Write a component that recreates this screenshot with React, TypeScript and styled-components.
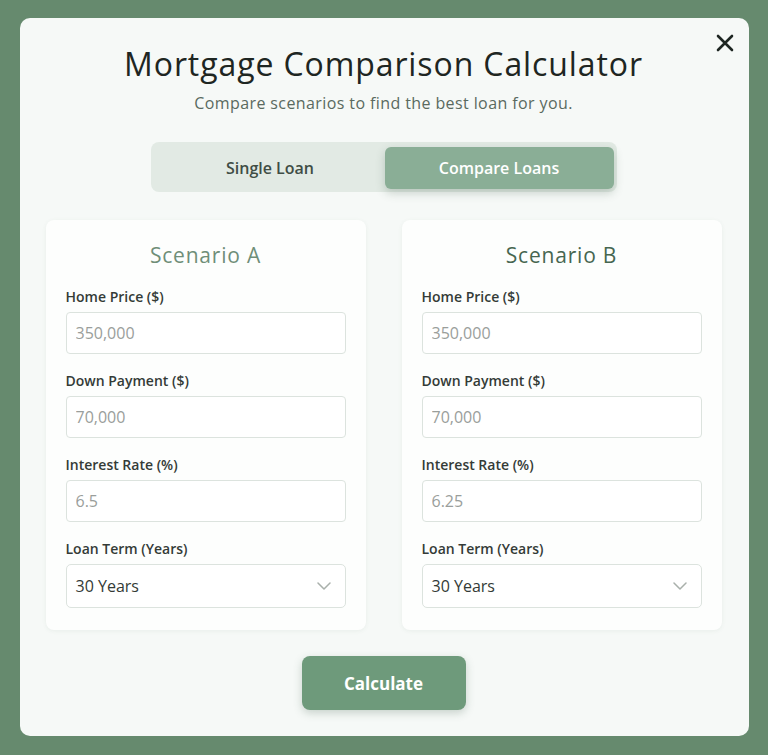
import React, { FunctionComponent } from 'react'
import styled, { createGlobalStyle } from 'styled-components'

const GlobalStyle = createGlobalStyle`
  html, body {
    margin: 0;
    padding: 0;
    background-color: #668a6e;
  }
  * {
    box-sizing: border-box;
  }
`

const Page = styled.div`
  display: flex;
  justify-content: center;
  padding-top: 18px;
  min-height: 755px;
  font-family: 'Open Sans', 'Noto Sans', sans-serif;
`

const Modal = styled.div`
  position: relative;
  width: 729px;
  height: 718px;
  background-color: #f6f9f7;
  border-radius: 10px;
  padding: 26px 27px 0 26px;
  display: flex;
  flex-direction: column;
  align-items: center;
`

const CloseButton = styled.button`
  position: absolute;
  top: 15px;
  right: 14px;
  width: 20px;
  height: 20px;
  padding: 0;
  border: none;
  background: none;
  cursor: pointer;
  display: flex;
  align-items: center;
  justify-content: center;
`

const Title = styled.h1`
  margin: 0;
  font-family: 'Open Sans', sans-serif;
  font-weight: 500;
  font-size: 32px;
  line-height: 40px;
  color: #1e2622;
  letter-spacing: 0.9px;
`

const Subtitle = styled.p`
  margin: 7px 0 0;
  font-size: 16px;
  line-height: 24px;
  letter-spacing: 0.4px;
  color: #5a6a60;
`

const Toggle = styled.div`
  margin-top: 27px;
  width: 466px;
  height: 50px;
  padding: 5px 3px 3px 5px;
  border-radius: 8px;
  background-color: #e2eae4;
  display: grid;
  grid-template-columns: 1fr 1fr;
`

const ToggleTab = styled.button<{ $active?: boolean }>`
  border: none;
  border-radius: 6px;
  font-family: 'Open Sans', sans-serif;
  font-size: 16px;
  font-weight: 600;
  cursor: pointer;
  color: ${({ $active }) => ($active ? '#ffffff' : '#3f4d45')};
  background-color: ${({ $active }) => ($active ? '#8aae96' : 'transparent')};
  box-shadow: ${({ $active }) => ($active ? '0 4px 10px rgba(60, 90, 70, 0.25)' : 'none')};
`

const Scenarios = styled.div`
  margin-top: 28px;
  width: 100%;
  display: grid;
  grid-template-columns: 320px 320px;
  column-gap: 36px;
`

const Card = styled.section`
  background-color: #fdfefd;
  border-radius: 8px;
  padding: 21px 20px 22px;
  box-shadow: 0 1px 4px rgba(80, 110, 90, 0.08);
`

const CardTitle = styled.h2<{ $dark?: boolean }>`
  margin: 0 0 18px;
  text-align: center;
  font-family: 'Open Sans', sans-serif;
  font-weight: 500;
  font-size: 21px;
  line-height: 28px;
  letter-spacing: 0.8px;
  color: ${({ $dark }) => ($dark ? '#466650' : '#6f8e78')};
`

const Field = styled.div`
  display: flex;
  flex-direction: column;
  & + & {
    margin-top: 17px;
  }
`

const Label = styled.label`
  font-size: 14px;
  line-height: 20px;
  font-weight: 600;
  color: #343b37;
  margin-bottom: 5px;
`

const Input = styled.input`
  height: 42px;
  width: 100%;
  border: 1px solid #dce3de;
  border-radius: 4px;
  background-color: #ffffff;
  padding: 0 9px;
  font-family: 'Open Sans', sans-serif;
  font-size: 16px;
  color: #333;
  &::placeholder {
    color: #9a9e9b;
  }
`

const SelectBox = styled.div`
  height: 44px;
  width: 100%;
  border: 1px solid #dce3de;
  border-radius: 5px;
  background-color: #ffffff;
  padding: 0 14px 0 9px;
  display: flex;
  align-items: center;
  justify-content: space-between;
  font-size: 16px;
  color: #333a36;
`

const CalculateButton = styled.button`
  margin-top: 26px;
  width: 164px;
  height: 54px;
  border: none;
  border-radius: 8px;
  background-color: #6e9a7b;
  color: #ffffff;
  font-family: 'Open Sans', sans-serif;
  font-size: 17px;
  font-weight: 700;
  box-shadow: 0 3px 8px rgba(60, 90, 70, 0.25);
  cursor: pointer;
`

interface ScenarioProps {
  name: string
  rate: string
  dark?: boolean
}

const Scenario: FunctionComponent<ScenarioProps> = ({ name, rate, dark }) => (
  <Card>
    <CardTitle $dark={dark}>{name}</CardTitle>
    <Field>
      <Label>Home Price ($)</Label>
      <Input placeholder="350,000" />
    </Field>
    <Field>
      <Label>Down Payment ($)</Label>
      <Input placeholder="70,000" />
    </Field>
    <Field>
      <Label>Interest Rate (%)</Label>
      <Input placeholder={rate} />
    </Field>
    <Field>
      <Label>Loan Term (Years)</Label>
      <SelectBox>
        <span>30 Years</span>
        <svg width="14" height="8" viewBox="0 0 14 8" fill="none">
          <path d="M1 1l6 6 6-6" stroke="#a9b0ab" strokeWidth="1.5" strokeLinecap="round" strokeLinejoin="round" />
        </svg>
      </SelectBox>
    </Field>
  </Card>
)

const App: FunctionComponent = () => (
  <Page>
    <GlobalStyle />
    <Modal>
      <CloseButton aria-label="Close">
        <svg width="18" height="18" viewBox="0 0 18 18" fill="none">
          <path d="M2 2l14 14M16 2L2 16" stroke="#1e2622" strokeWidth="2.6" strokeLinecap="round" />
        </svg>
      </CloseButton>
      <Title>Mortgage Comparison Calculator</Title>
      <Subtitle>Compare scenarios to find the best loan for you.</Subtitle>
      <Toggle>
        <ToggleTab>Single Loan</ToggleTab>
        <ToggleTab $active>Compare Loans</ToggleTab>
      </Toggle>
      <Scenarios>
        <Scenario name="Scenario A" rate="6.5" />
        <Scenario name="Scenario B" rate="6.25" dark />
      </Scenarios>
      <CalculateButton>Calculate</CalculateButton>
    </Modal>
  </Page>
)

export default App
